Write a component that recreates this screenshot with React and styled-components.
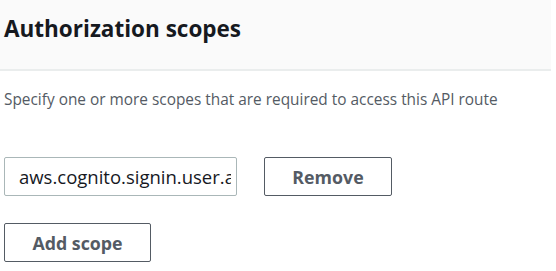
import React from "react";
import styled, { createGlobalStyle } from "styled-components";

const Global = createGlobalStyle`
  html, body { margin: 0; padding: 0; background: #ffffff; }
  body { font-family: "Open Sans", "Noto Sans", Arial, sans-serif; }
`;

const Card = styled.section`
  width: 551px;
  background: #ffffff;
`;

const Header = styled.header`
  height: 71px;
  box-sizing: border-box;
  background: #fafafa;
  border-bottom: 2px solid #eaeded;
  padding: 15px 4px 0;
`;

const Title = styled.h2`
  margin: 0;
  font-size: 22.5px;
  line-height: 28px;
  font-weight: 700;
  color: #16191f;
`;

const Body = styled.div`
  padding: 18px 4px 0;
  display: flex;
  flex-direction: column;
`;

const Description = styled.p`
  margin: 0;
  font-size: 15.4px;
  line-height: 22px;
  color: #545b64;
`;

const Row = styled.div`
  display: flex;
  gap: 27px;
  margin-top: ${(p) => p.$top}px;
`;

const Input = styled.input`
  box-sizing: border-box;
  width: 233px;
  height: 39px;
  padding: 0 5px 0 14px;
  border: 1px solid #aab7b8;
  border-radius: 2px;
  background: #ffffff;
  font-family: inherit;
  font-size: 18.5px;
  color: #16191f;
  outline: none;
`;

const Button = styled.button`
  box-sizing: border-box;
  width: ${(p) => p.$width}px;
  height: 39px;
  border: 1px solid #545b64;
  border-radius: 2px;
  background: #ffffff;
  font-family: inherit;
  font-size: 17.8px;
  font-weight: 700;
  color: #545b64;
  cursor: pointer;
  padding: 0;
`;

export default function App() {
  return (
    <>
      <Global />
      <Card>
        <Header>
          <Title>Authorization scopes</Title>
        </Header>
        <Body>
          <Description>
            Specify one or more scopes that are required to access this API route
          </Description>
          <Row $top={46}>
            <Input defaultValue="aws.cognito.signin.user.admin" readOnly />
            <Button $width={128}>Remove</Button>
          </Row>
          <Row $top={27}>
            <Button $width={147}>Add scope</Button>
          </Row>
        </Body>
      </Card>
    </>
  );
}
